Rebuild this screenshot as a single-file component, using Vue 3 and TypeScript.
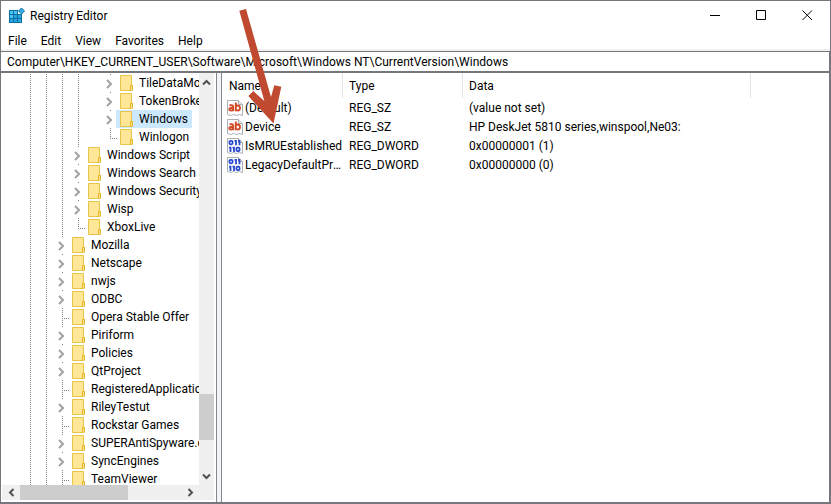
<script setup lang="ts">
import { ref } from 'vue'

type Guide = 'line' | 'none' | 'expand' | 'tee' | 'end'

interface TreeItem {
  name: string
  guides: Guide[]
}

interface RegistryValue {
  name: string
  type: string
  data: string
  kind: 'text' | 'binary'
}

const deep = (name: string, last: Guide): TreeItem => ({
  name,
  guides: ['line', 'line', 'line', 'line', 'none', last],
})
const middle = (name: string, last: Guide): TreeItem => ({
  name,
  guides: ['line', 'line', 'line', last],
})
const outer = (name: string, last: Guide = 'expand'): TreeItem => ({
  name,
  guides: ['line', 'line', last],
})

const items: TreeItem[] = [
  deep('TileDataModel', 'expand'),
  deep('TokenBroker', 'expand'),
  deep('Windows', 'expand'),
  deep('Winlogon', 'end'),
  middle('Windows Script', 'expand'),
  middle('Windows Search', 'expand'),
  middle('Windows Security', 'expand'),
  middle('Wisp', 'expand'),
  middle('XboxLive', 'end'),
  outer('Mozilla'),
  outer('Netscape'),
  outer('nwjs'),
  outer('ODBC'),
  outer('Opera Stable Offer', 'tee'),
  outer('Piriform'),
  outer('Policies'),
  outer('QtProject'),
  outer('RegisteredApplications', 'tee'),
  outer('RileyTestut'),
  outer('Rockstar Games', 'tee'),
  outer('SUPERAntiSpyware.com'),
  outer('SyncEngines'),
  outer('TeamViewer', 'tee'),
]

const values: RegistryValue[] = [
  { name: '(Default)', type: 'REG_SZ', data: '(value not set)', kind: 'text' },
  { name: 'Device', type: 'REG_SZ', data: 'HP DeskJet 5810 series,winspool,Ne03:', kind: 'text' },
  { name: 'IsMRUEstablished', type: 'REG_DWORD', data: '0x00000001 (1)', kind: 'binary' },
  { name: 'LegacyDefaultPrinterMode', type: 'REG_DWORD', data: '0x00000000 (0)', kind: 'binary' },
]

const menus = ['File', 'Edit', 'View', 'Favorites', 'Help']
const selected = ref('Windows')
const path = ref('Computer\\HKEY_CURRENT_USER\\Software\\Microsoft\\Windows NT\\CurrentVersion\\Windows')
</script>

<template>
  <div class="window">
    <header class="titlebar">
      <svg class="app-icon" viewBox="0 0 16 16" aria-hidden="true">
        <rect x="0" y="2" width="13" height="13" fill="#0b6fa5" />
        <g fill="#4cc5f1">
          <rect x="1" y="3" width="3" height="3" /><rect x="5" y="3" width="3" height="3" />
          <rect x="1" y="7" width="3" height="3" />
        </g>
        <g fill="#2aa5dc">
          <rect x="5" y="7" width="3" height="3" /><rect x="9" y="7" width="3" height="3" />
          <rect x="1" y="11" width="3" height="3" /><rect x="5" y="11" width="3" height="3" />
          <rect x="9" y="11" width="3" height="3" />
        </g>
        <path d="M9 2h4v4H9z" fill="#fff" />
        <path d="M12.5 0l3 3-3 3-3-3z" fill="#35abdd" stroke="#1679ad" />
      </svg>
      <h1 class="title">Registry Editor</h1>
      <div class="caption">
        <button type="button" aria-label="Minimize">
          <svg viewBox="0 0 11 11"><path d="M0 5.500h10" /></svg>
        </button>
        <button type="button" aria-label="Maximize">
          <svg viewBox="0 0 11 11"><path d="M.5.5h9v9h-9z" /></svg>
        </button>
        <button type="button" aria-label="Close">
          <svg viewBox="0 0 11 11"><path d="M.5.5l9.500 9.500M10 .5L.5 10" /></svg>
        </button>
      </div>
    </header>

    <nav class="menu">
      <button v-for="m in menus" :key="m" type="button">{{ m }}</button>
    </nav>

    <input v-model="path" class="address" type="text" aria-label="Address" />

    <main class="body">
      <section class="tree-pane">
        <div class="tree-row">
          <ul class="tree">
            <li v-for="item in items" :key="item.name">
              <span v-for="(g, i) in item.guides" :key="i" class="guide" :class="g">
                <svg v-if="g === 'expand'" class="chevron" viewBox="0 0 6 10"><path d="M1 1l4 4-4 4" /></svg>
              </span>
              <button
                type="button"
                class="node"
                :class="{ selected: selected === item.name }"
                @click="selected = item.name"
              >
                <svg class="folder" viewBox="0 0 13 16" aria-hidden="true">
                  <path d="M.5.5h11v10h1v5H.5z" fill="#ffe797" stroke="#e9c547" />
                  <path d="M10.500 15V10.500h2V15" fill="#ffe08a" stroke="#e3b62c" />
                </svg>
                <span>{{ item.name }}</span>
              </button>
            </li>
          </ul>
          <div class="vbar">
            <button type="button" aria-label="Scroll up">
              <svg viewBox="0 0 9 9"><path d="M1 6.500L4.500 3 8 6.500" /></svg>
            </button>
            <div class="vtrack"><div class="vthumb"></div></div>
            <button type="button" aria-label="Scroll down">
              <svg viewBox="0 0 9 9"><path d="M1 2.500L4.500 6 8 2.500" /></svg>
            </button>
          </div>
        </div>
        <div class="hbar">
          <button type="button" aria-label="Scroll left">
            <svg viewBox="0 0 9 9"><path d="M6.500 1L3 4.500 6.500 8" /></svg>
          </button>
          <div class="htrack"><div class="hthumb"></div></div>
          <button type="button" aria-label="Scroll right">
            <svg viewBox="0 0 9 9"><path d="M2.500 1L6 4.500 2.500 8" /></svg>
          </button>
        </div>
      </section>

      <section class="list-pane">
        <table>
          <colgroup>
            <col class="c-name" /><col class="c-type" /><col class="c-data" /><col />
          </colgroup>
          <thead>
            <tr><th scope="col">Name</th><th scope="col">Type</th><th scope="col">Data</th><td></td></tr>
          </thead>
          <tbody>
            <tr v-for="v in values" :key="v.name">
              <td>
                <div class="name">
                  <svg class="value-icon" viewBox="0 0 16 16" aria-hidden="true">
                    <path d="M.5.5h11l4 4v11l-3-1-3 1-3-1-3 1-3-1z" fill="#fff" stroke="#a9afb5" />
                    <path d="M11.500.5v4h4" fill="#e8eaec" stroke="#a9afb5" />
                    <g v-if="v.kind === 'text'" fill="none" stroke="#d24a26" stroke-width="1.900">
                      <path d="M2.500 5.300h2.200q1.500 0 1.500 1.500v4.500M6.200 8H4Q2.300 8 2.300 9.300T4 10.500q1.800 0 2.200-1.200" />
                      <path d="M8.800 2.500v8.800M8.800 6.800q.6-1.300 2-1.300 2.200 0 2.200 2.500t-2.200 2.500q-1.400 0-2-1" />
                    </g>
                    <g v-else fill="none" stroke="#2847cf" stroke-width="1.800">
                      <rect x="2.400" y="2.900" width="3.200" height="3.400" rx="1.200" />
                      <path d="M9 2v5.200M12.500 2v5.200M7.500 2.900H9M11 2.900h1.500" />
                      <path d="M3.500 8.800V14M7 8.800V14M2 9.700h1.500M5.500 9.700H7" />
                      <rect x="9.400" y="9.700" width="3.200" height="3.400" rx="1.200" />
                    </g>
                  </svg>
                  <span>{{ v.name }}</span>
                </div>
              </td>
              <td>{{ v.type }}</td>
              <td>{{ v.data }}</td>
              <td></td>
            </tr>
          </tbody>
        </table>
      </section>
    </main>

    <svg class="pointer" viewBox="0 0 44 118" aria-hidden="true">
      <path d="M1.300 4.700L8 3l25 88 3.300-11.700 7 1.400-7.800 36.800L10.300 90l5-5 11 10z" fill="#bf4a30" />
    </svg>
  </div>
</template>

<style>
body {
  margin: 0;
}
</style>

<style scoped>
.window {
  position: relative;
  box-sizing: border-box;
  display: flex;
  flex-direction: column;
  height: 100vh;
  border: solid #75777c;
  border-width: 1px 1px 2px;
  background: #fff;
  color: #000;
  font: 12px/18px Roboto, "Open Sans", sans-serif;
  overflow: hidden;
}
button {
  padding: 0;
  border: 0;
  background: none;
  color: inherit;
  font: inherit;
}
svg {
  display: block;
  flex: none;
}
.titlebar {
  display: flex;
  align-items: center;
  height: 30px;
  padding-left: 8px;
}
.app-icon {
  width: 16px;
  height: 16px;
}
.title {
  flex: 1;
  margin: 0 0 0 5px;
  font-size: 12px;
  font-weight: 400;
}
.caption {
  display: flex;
  align-self: flex-start;
}
.caption button {
  display: grid;
  place-items: center;
  width: 46px;
  height: 29px;
}
.caption svg {
  width: 11px;
  height: 11px;
  fill: none;
  stroke: #000;
}
.menu {
  display: flex;
  gap: 14px;
  height: 18px;
  padding-left: 7px;
  border-bottom: 2px solid #f0f0f0;
}
.menu button {
  line-height: 20px;
}
.address {
  box-sizing: border-box;
  width: 100%;
  height: 22px;
  margin: 0;
  padding: 0 6px;
  border: solid #75777c;
  border-width: 1px 1px 2px 0;
  border-radius: 0;
  background: #fff;
  color: inherit;
  font: inherit;
  outline: 0;
}
.body {
  display: flex;
  flex: 1;
  min-height: 0;
  border-right: 1px solid #75777c;
  background: #f4f4f4;
}
.tree-pane {
  display: flex;
  flex-direction: column;
  width: 214px;
  border-right: 1px solid #828790;
  padding-left: 1px;
  background: #fff;
}
.tree-row {
  display: flex;
  flex: 1;
  min-height: 0;
}
.tree {
  flex: 1;
  min-width: 0;
  margin: 0;
  padding: 1px 0 0 20px;
  list-style: none;
  overflow: hidden;
}
.tree li {
  display: flex;
  height: 18px;
  white-space: nowrap;
}
.guide {
  display: flex;
  flex: none;
  width: 16px;
  height: 18px;
  background-repeat: no-repeat;
}
.line,
.tee,
.end,
.expand {
  background-image: repeating-linear-gradient(#808080 0 1px, transparent 1px 2px);
  background-position: 8px 0;
  background-size: 1px 18px;
}
.tee,
.end {
  background-image: repeating-linear-gradient(#808080 0 1px, transparent 1px 2px),
    repeating-linear-gradient(90deg, #808080 0 1px, transparent 1px 2px);
  background-position: 8px 0, 8px 10px;
  background-size: 1px 18px, 8px 1px;
}
.end {
  background-size: 1px 10px, 8px 1px;
}
.expand {
  align-items: center;
  padding-left: 4px;
  box-sizing: border-box;
  background-size: 1px 2px;
}
.chevron {
  width: 6px;
  height: 10px;
  margin-top: 2px;
  fill: none;
  stroke: #a3a3a3;
  stroke-width: 2;
}
.node {
  display: flex;
  align-items: center;
  gap: 6px;
  margin-left: -2px;
  padding: 0 4px;
  white-space: nowrap;
}
.node.selected {
  background: #cce8ff;
}
.folder {
  width: 13px;
  height: 16px;
}
.vbar {
  display: flex;
  flex-direction: column;
  width: 15px;
  margin-right: 2px;
  background: #f0f0f0;
}
.vbar button,
.hbar button {
  display: grid;
  place-items: center;
  width: 15px;
  height: 18px;
}
.hbar button {
  width: 18px;
  height: 15px;
}
.vbar svg,
.hbar svg {
  width: 9px;
  height: 9px;
  fill: none;
  stroke: #505050;
  stroke-width: 2;
}
.vtrack,
.htrack {
  display: flex;
  flex: 1;
}
.vtrack {
  align-items: flex-end;
  padding-bottom: 27px;
}
.vthumb {
  width: 15px;
  height: 46px;
  background: #cdcdcd;
}
.hbar {
  display: flex;
  margin: 0 2px 2px 0;
  padding-right: 15px;
  background: #f0f0f0;
}
.hthumb {
  width: 67%;
  height: 15px;
  background: #cdcdcd;
}
.list-pane {
  flex: 1;
  min-width: 0;
  margin-left: 4px;
  border-left: 1px solid #828790;
  background: #fff;
}
table {
  width: 100%;
  table-layout: fixed;
  border-collapse: separate;
  border-spacing: 0;
}
.c-name {
  width: 121px;
}
.c-type {
  width: 120px;
}
.c-data {
  width: 288px;
}
th,
td {
  height: 19px;
  padding: 0 0 0 6px;
  overflow: hidden;
  line-height: 18px;
  text-align: left;
  white-space: nowrap;
}
th {
  height: 25px;
  border-right: 1px solid #e2e2e2;
  font-weight: 400;
}
th:first-child {
  padding-left: 7px;
}
td:first-child {
  padding-left: 5px;
}
.name {
  display: flex;
  align-items: center;
  gap: 2px;
}
.name span {
  min-width: 0;
  overflow: hidden;
  text-overflow: ellipsis;
}
.value-icon {
  width: 16px;
  height: 16px;
}
.pointer {
  position: absolute;
  top: 5px;
  left: 237px;
  width: 44px;
  height: 118px;
  pointer-events: none;
}
</style>
